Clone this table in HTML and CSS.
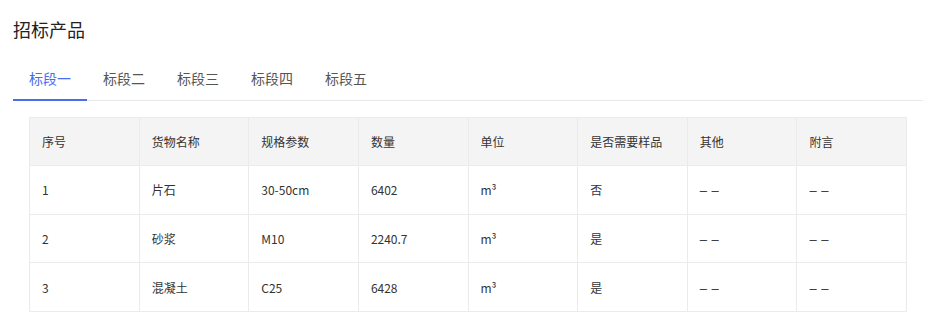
FILE: index.html
```html
<!DOCTYPE html>
<html lang="zh-CN">
<head>
<meta charset="utf-8">
<link rel="stylesheet" href="styles.css">
</head>
<body>
<div class="page">
  <h2 class="title">招标产品</h2>
  <div class="tabs">
    <div class="tab active">标段一</div>
    <div class="tab">标段二</div>
    <div class="tab">标段三</div>
    <div class="tab">标段四</div>
    <div class="tab">标段五</div>
  </div>
  <div class="table-wrap">
    <table class="grid">
      <thead>
        <tr><th>序号</th><th>货物名称</th><th>规格参数</th><th>数量</th><th>单位</th><th>是否需要样品</th><th>其他</th><th>附言</th></tr>
      </thead>
      <tbody>
        <tr><td>1</td><td>片石</td><td>30-50cm</td><td>6402</td><td>m³</td><td>否</td><td><span class="dash">– –</span></td><td><span class="dash">– –</span></td></tr>
        <tr><td>2</td><td>砂浆</td><td>M10</td><td>2240.7</td><td>m³</td><td>是</td><td><span class="dash">– –</span></td><td><span class="dash">– –</span></td></tr>
        <tr><td>3</td><td>混凝土</td><td>C25</td><td>6428</td><td>m³</td><td>是</td><td><span class="dash">– –</span></td><td><span class="dash">– –</span></td></tr>
      </tbody>
    </table>
  </div>
</div>
</body>
</html>
```
FILE: styles.css
```css
html, body {
  margin: 0;
  padding: 0;
  background: #fff;
}
body {
  font-family: "Noto Sans CJK SC", "Noto Sans", sans-serif;
  color: #333;
}
.page {
  width: 910px;
  padding: 0 0 0 13px;
}
.title {
  margin: 0;
  padding-top: 16px;
  height: 40px;
  box-sizing: border-box;
  font-size: 18px;
  font-weight: normal;
  line-height: 26px;
  color: #222;
}
.tabs {
  display: flex;
  padding-top: 16px;
  border-bottom: 1px solid #e8e8e8;
}
.tab {
  padding: 2px 16px 0 16px;
  font-size: 14px;
  line-height: 41px;
  height: 41px;
  color: #555;
  border-bottom: 2px solid transparent;
  margin-bottom: -1px;
}
.tab.active {
  color: #4a6cf0;
  border-bottom-color: #4a6cf0;
}
.table-wrap {
  padding: 16px 16px 0 16px;
}
.grid {
  width: 878px;
  border-collapse: collapse;
  table-layout: fixed;
  font-size: 12px;
}
.grid th, .grid td {
  border: 1px solid #ebebeb;
  text-align: left;
  font-weight: normal;
  padding: 0 12px;
  color: #333;
}
.grid th {
  background: #f4f4f4;
  height: 47px;
}
.grid td {
  height: 47.7px;
}
.dash {
  font-family: "Liberation Sans", sans-serif;
  font-size: 13px;
  letter-spacing: 0.5px;
}
```
